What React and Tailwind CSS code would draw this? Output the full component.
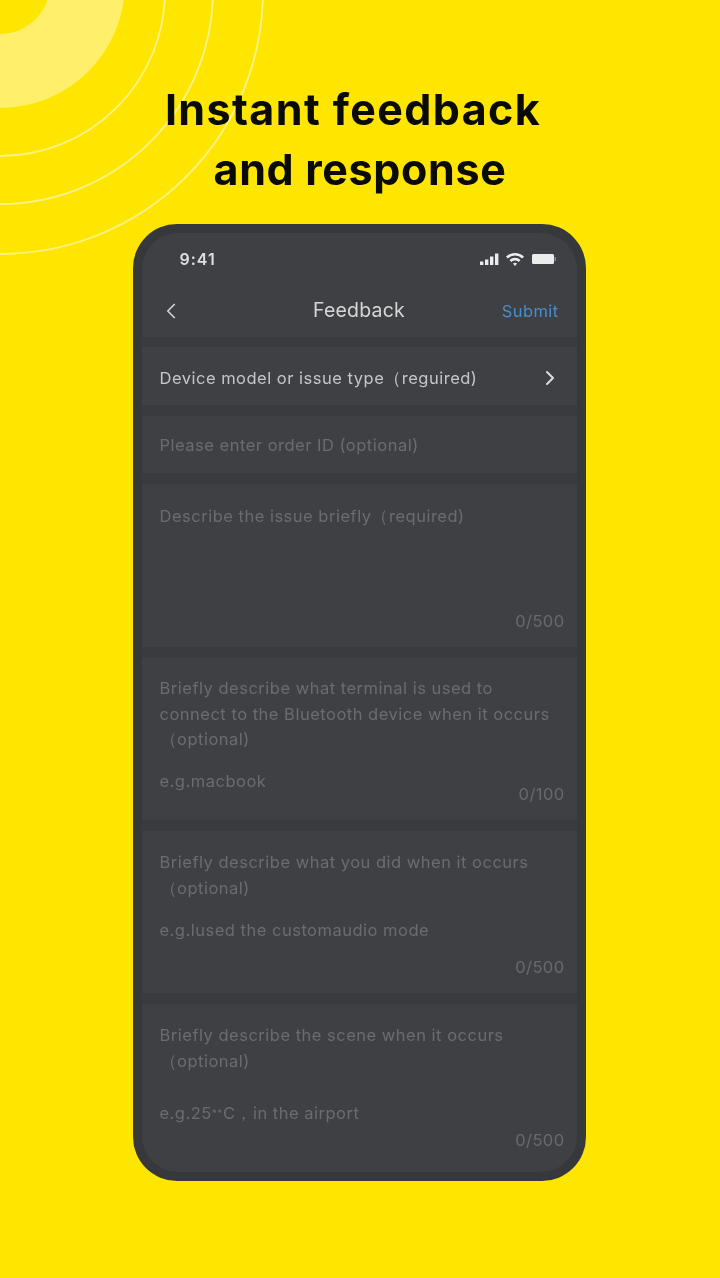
import React from "react";
import {ChevronLeft, ChevronRight} from "lucide-react";

const Row = ({className = "", children}) => (
    <div className={`relative bg-[#3f4044] px-[18px] text-[16.5px] leading-[26px] tracking-[0.5px] text-[#6b6c6f] ${className}`}>
        {children}
    </div>
);

const Counter = ({className = "bottom-[16px]", children}) => (
    <div className={`absolute right-[12px] text-[16.5px] leading-[20px] tracking-[0.4px] text-[#68696c] ${className}`}>{children}</div>
);

export default function App() {
    return (
        <div
            className="relative w-[720px] h-[1278px] overflow-hidden bg-[#ffe600] flex flex-col items-center blur-[0.6px]"
            style={{fontFamily: "Inter, 'Noto Sans', sans-serif"}}
        >
            {/* Круги в углу */}
            <svg className="absolute left-0 top-0" width="290" height="270" fill="none">
                <circle cx="0" cy="-17" r="125" fill="#ffef6b"/>
                <circle cx="0" cy="-16" r="50" fill="#ffe600"/>
                <circle cx="0" cy="-9" r="165" stroke="#fff28a" strokeWidth="1.8"/>
                <circle cx="0" cy="-9" r="213" stroke="#fff28a" strokeWidth="1.8"/>
                <circle cx="0" cy="-9" r="263" stroke="#fff28a" strokeWidth="1.8"/>
            </svg>

            {/* Заголовок */}
            <div className="relative mt-[79px] mb-[1px] text-center text-[43px] leading-[60px] font-bold text-[#0b0b06]">
                <div className="pr-[14px] tracking-[1.4px]">Instant feedback</div>
                <div className="tracking-[0.65px]">and response</div>
            </div>

            {/* Телефон */}
            <div className="relative mt-[24px] mr-[2px] w-[453px] h-[957px] rounded-[44px] bg-[#37383b] p-[9px]">
                <div className="w-full h-full rounded-[36px] overflow-hidden bg-[#3a3b3e] flex flex-col">
                    {/* Статус-бар и шапка */}
                    <div className="h-[104px] shrink-0 bg-[#3f4044] flex flex-col">
                        <div className="h-[50px] pt-[2px] pl-[38px] pr-[21px] flex items-center justify-between">
                            <span className="text-[16px] font-semibold tracking-[1px] text-[#dedede]">9:41</span>
                            <svg width="76" height="16" viewBox="0 0 76 16" fill="#ececec">
                                <rect x="0" y="10.5" width="3.4" height="3.5"/>
                                <rect x="5" y="8.5" width="3.4" height="5.5"/>
                                <rect x="10" y="5.5" width="3.4" height="8.5"/>
                                <rect x="15" y="2.5" width="3.4" height="11.5"/>
                                <path d="M26 5.5 a13 13 0 0 1 18 0 l-1.8 2 a10.4 10.4 0 0 0 -14.4 0z"/>
                                <path d="M29.5 9 a8 8 0 0 1 11 0 l-1.8 2 a5.4 5.4 0 0 0 -7.4 0z"/>
                                <path d="M33 12.4 a3.4 3.4 0 0 1 4 0 l-2 2.6z"/>
                                <rect x="52" y="3" width="22" height="10" rx="1.5"/>
                                <rect x="74.5" y="6" width="1.5" height="4" fill="#8c8c8c"/>
                            </svg>
                        </div>
                        <div className="relative flex-1 flex items-center justify-center pt-[2px]">
                            <ChevronLeft className="absolute left-[16px] text-[#d0d0d0]" size={26} strokeWidth={1.6}/>
                            <span className="text-[19.5px] tracking-[0.2px] text-[#d6d6d6]">Feedback</span>
                            <span className="absolute right-[18px] text-[16.5px] tracking-[0.4px] text-[#4a8ccc]">Submit</span>
                        </div>
                    </div>

                    {/* Форма */}
                    <div className="flex-1 flex flex-col gap-[11px] pt-[10px]">
                        <Row className="h-[58px] pt-[3px] flex items-center justify-between">
                            <span className="text-[#c6c6c7]">Device model or issue type（reguired)</span>
                            <ChevronRight className="mr-[-3px] text-[#dcdcdc]" size={24} strokeWidth={2}/>
                        </Row>
                        <Row className="h-[57px] flex items-center">
                            Please enter order ID (optional)
                        </Row>
                        <Row className="h-[163px] pt-[19px]">
                            Describe the issue briefly（required)
                            <Counter>0/500</Counter>
                        </Row>
                        <Row className="h-[162px] pt-[18px]">
                            <div className="leading-[25.5px]">Briefly describe what terminal is used to<br/>connect to the Bluetooth device when it occurs<br/>（optional)</div>
                            <div className="mt-[15px]">e.g.macbook</div>
                            <Counter>0/100</Counter>
                        </Row>
                        <Row className="h-[162px] pt-[18px]">
                            <div>Briefly describe what you did when it occurs<br/>（optional)</div>
                            <div className="mt-[16px]">e.g.lused the customaudio mode</div>
                            <Counter>0/500</Counter>
                        </Row>
                        <Row className="flex-1 pt-[18px]">
                            <div>Briefly describe the scene when it occurs<br/>（optional)</div>
                            <div className="mt-[26px]">e.g.25<span className="text-[10px] align-top">**</span>C，in the airport</div>
                            <Counter className="bottom-[22px]">0/500</Counter>
                        </Row>
                    </div>
                </div>
            </div>
        </div>
    );
}
